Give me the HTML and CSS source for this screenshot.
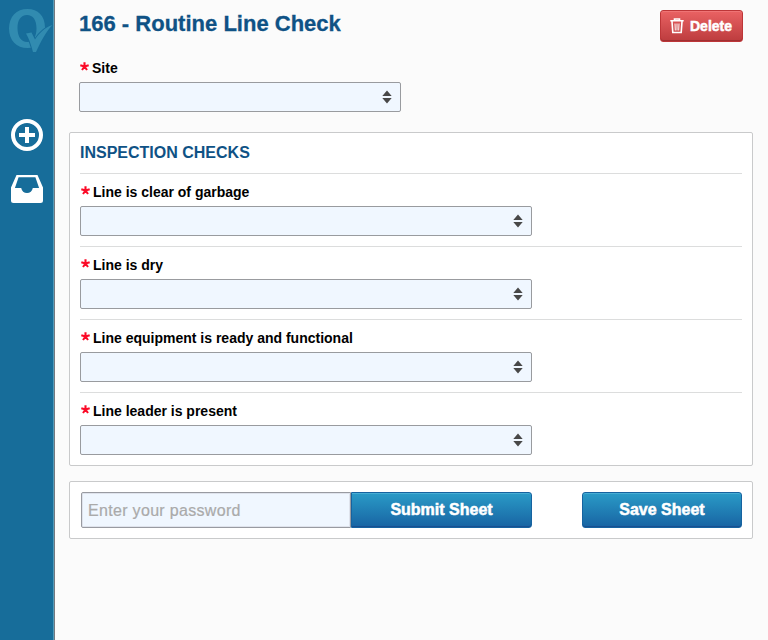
FILE: index.html
```
<!DOCTYPE html>
<html lang="en">
<head>
<meta charset="utf-8">
<title>166 - Routine Line Check</title>
<link rel="stylesheet" href="styles.css">
</head>
<body>
<svg class="defs" width="0" height="0">
  <symbol id="arrows" viewBox="0 0 10 14"><path d="M5 .5 9.700 6H.3zM5 13.500.3 8h9.400z" fill="#484848"/></symbol>
  <symbol id="required" viewBox="0 0 9 10"><path d="M4.500 4.500V.3M4.500 4.500 .3 3.200M4.500 4.500l4.200-1.300M4.500 4.500 2 8M4.500 4.500 7 8" fill="none" stroke="#fb0a27" stroke-width="2.100"/></symbol>
</svg>
<nav class="sidebar">
  <svg class="logo" viewBox="0 0 45 45">
    <path fill-rule="evenodd" d="M18.500 0C29 0 36 7 36 18.500C36 32 28.500 39 18.500 39C7.500 39 0 31.500 0 19.500C0 7.500 7.500 0 18.500 0ZM18 6C11.500 6 8.500 11.500 8.500 19C8.500 28 12.500 33.500 19 33C24.500 32.500 27.500 27 27.500 19.500C27.500 11 24 6 18 6Z"/>
    <path class="tick" d="M17 24.500L22.500 23.500L26 30.500C30 24.500 35.500 18.500 43.500 16C37 22.500 31.500 33 27 43H24C22 35.500 20 29.500 17 24.500Z"/>
  </svg>
  <svg class="add" viewBox="0 0 32 32"><circle cx="16" cy="16" r="14" fill="none" stroke="#fff" stroke-width="4"/><path d="M14 8h4v6h6v4h-6v6h-4v-6H8v-4h6z" fill="#fff"/></svg>
  <svg class="inbox" viewBox="0 0 32 28"><path fill="#fff" fill-rule="evenodd" d="M5.500 0h21L32 12.500V25.500Q32 28 29.500 28h-27Q0 28 0 25.500V12.500ZM7.600 2.300 3.900 13h6.300C10.700 16 13 18 16 18s5.300-2 5.800-5h6.300L24.400 2.300Z"/></svg>
</nav>
<main class="page">
  <header class="header">
    <h1 class="title">166 - Routine Line Check</h1>
    <button class="btn delete">
      <svg class="trash" viewBox="0 0 14 16"><path d="M.3 2.800h13.400M4.500 2.300V1h5v1.300M2 3.500l.8 11h8.400l.8-11" fill="none" stroke="#fff" stroke-width="1.600"/><path d="M5 5.500l.3 7M7 5.500v7M9 5.500l-.3 7" fill="none" stroke="#fff" stroke-width="1"/></svg>
      <span class="delete-text">Delete</span>
    </button>
  </header>
  <section class="site">
    <div class="label"><svg class="star"><use href="#required"/></svg><span>Site</span></div>
    <div class="select short"><svg class="arrows"><use href="#arrows"/></svg></div>
  </section>
  <section class="panel">
    <h2 class="heading">INSPECTION CHECKS</h2>
    <div class="row">
      <div class="label"><svg class="star"><use href="#required"/></svg><span>Line is clear of garbage</span></div>
      <div class="select"><svg class="arrows"><use href="#arrows"/></svg></div>
    </div>
    <div class="row">
      <div class="label"><svg class="star"><use href="#required"/></svg><span>Line is dry</span></div>
      <div class="select"><svg class="arrows"><use href="#arrows"/></svg></div>
    </div>
    <div class="row">
      <div class="label"><svg class="star"><use href="#required"/></svg><span>Line equipment is ready and functional</span></div>
      <div class="select"><svg class="arrows"><use href="#arrows"/></svg></div>
    </div>
    <div class="row">
      <div class="label"><svg class="star"><use href="#required"/></svg><span>Line leader is present</span></div>
      <div class="select"><svg class="arrows"><use href="#arrows"/></svg></div>
    </div>
  </section>
  <section class="panel actions">
    <input class="password" type="password" placeholder="Enter your password">
    <button class="btn submit">Submit Sheet</button>
    <button class="btn save">Save Sheet</button>
  </section>
</main>
</body>
</html>
```
FILE: styles.css
```
* { box-sizing: border-box; }
body {
  margin: 0;
  height: 640px;
  display: flex;
  overflow: hidden;
  background: #fbfbfb;
  color: #000;
  font-family: "Liberation Sans", Arial, sans-serif;
}
svg { display: block; flex: none; }
.defs { position: absolute; }
.sidebar {
  flex: none;
  width: 55px;
  background: #176d9a;
  border-right: 1px solid #737980;
  box-shadow: inset -1px 0 #5199b8;
  display: flex;
  flex-direction: column;
}
.logo { width: 45px; height: 45px; margin: 9px 0 0 9px; fill: #318bb0; }
.tick { stroke: #176d9a; stroke-width: 2px; paint-order: stroke; }
.add { width: 32px; height: 32px; margin: 65px 0 0 11px; }
.inbox { width: 32px; height: 28px; margin: 24px 0 0 11px; }
.page { flex: 1; padding: 10px 15px 0 14px; }
.header {
  display: flex;
  justify-content: space-between;
  height: 48px;
  padding: 0 10px;
}
.title {
  margin: 0;
  font-size: 22px;
  letter-spacing: .01px;
  line-height: 27px;
  color: #0f5285;
  white-space: nowrap;
  -webkit-text-stroke: .3px #0f5285;
}
.btn {
  font: bold 16px "Liberation Sans", Arial, sans-serif;
  color: #fff;
  padding: 0;
  border: 1px solid #1663a0;
  border-radius: 3px;
  background: linear-gradient(#2a9bc7, #1864a3);
  box-shadow: inset 0 1px #47add3, inset 0 -1px #194f91;
  -webkit-text-stroke: .5px #fff;
}
.delete {
  width: 83px;
  height: 32px;
  display: flex;
  align-items: center;
  padding-left: 9px;
  gap: 6px;
  font-size: 14px;
  border-color: #bd3638;
  background: linear-gradient(#ea6263, #bd3c3e);
  box-shadow: inset 0 1px #ef7475, inset 0 -1px #9f3032;
}
.trash { width: 14px; height: 16px; }
.site { padding-left: 10px; height: 74px; }
.label {
  display: flex;
  align-items: center;
  height: 20px;
  margin-bottom: 4px;
  gap: 3px;
  font-size: 14px;
  font-weight: bold;
  white-space: nowrap;
}
.star { width: 9px; height: 10px; margin: 0 0 2px 1px; }
.select {
  width: 452px;
  height: 30px;
  display: flex;
  align-items: center;
  justify-content: flex-end;
  padding-right: 8px;
  background: #f0f7ff;
  border: 1px solid #999b9f;
  border-radius: 2px;
}
.short { width: 322px; }
.arrows { width: 10px; height: 14px; }
.panel {
  background: #fff;
  border: 1px solid #c9cacb;
  border-radius: 2px;
  padding: 0 10px;
}
.heading {
  margin: 0;
  height: 40px;
  font-size: 16px;
  line-height: 39px;
  color: #0f5285;
}
.row {
  height: 73px;
  padding-top: 8px;
  border-top: 1px solid #dcdddd;
}
.actions {
  display: flex;
  height: 58px;
  margin-top: 15px;
  padding: 10px 10px 0 11px;
}
.password {
  width: 270px;
  height: 36px;
  padding: 1px 7px 0 6px;
  font: 16px "Liberation Sans", Arial, sans-serif;
  letter-spacing: .32px;
  background: #f0f7ff;
  border: 1px solid #999ba1;
  border-radius: 2px 0 0 2px;
  box-shadow: inset 0 0 0 1px #dfe3ec;
  outline: 0;
}
.password::placeholder { color: #aaa; opacity: 1; -webkit-text-stroke: .2px #aaa; }
.submit { width: 181px; height: 36px; border-radius: 0 3px 3px 0; }
.save { width: 160px; height: 36px; margin-left: auto; }
```
